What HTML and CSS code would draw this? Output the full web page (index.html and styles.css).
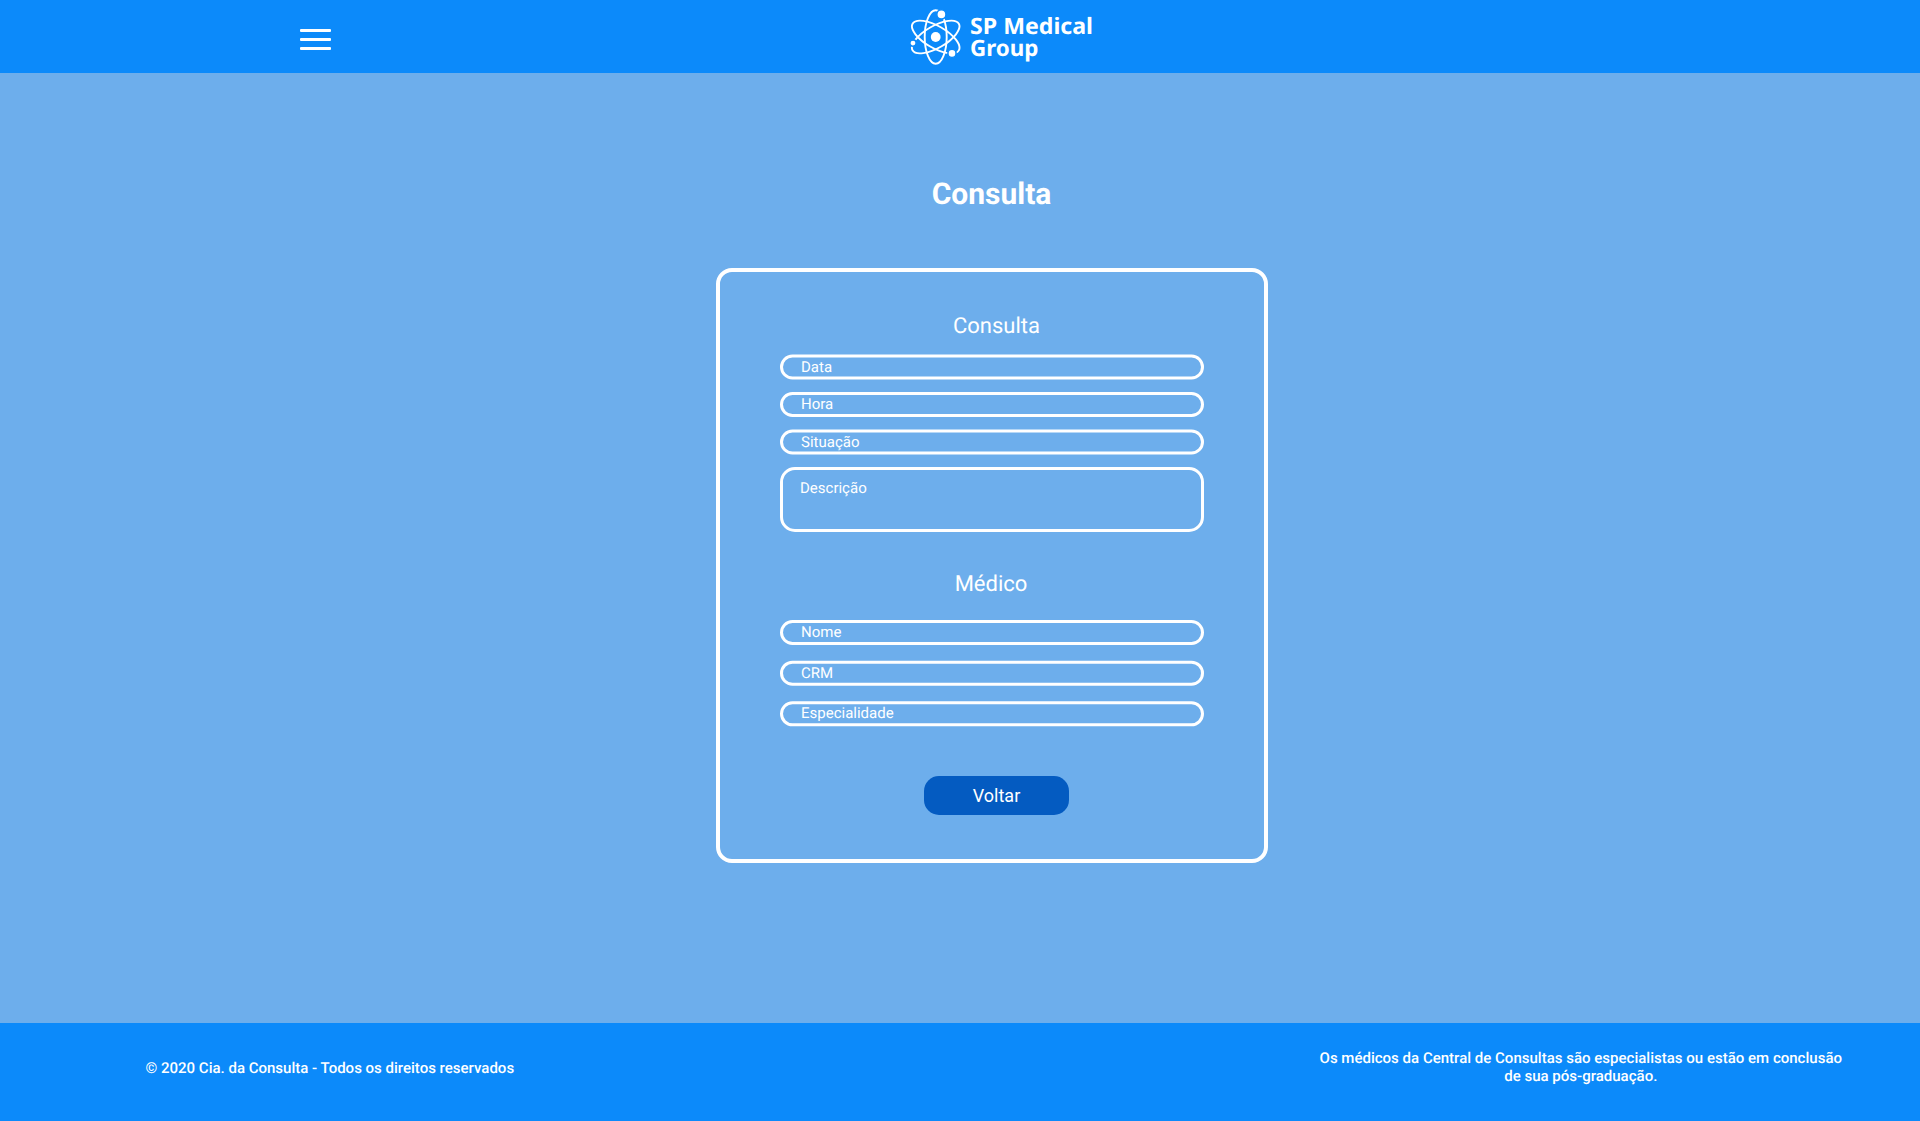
FILE: index.html
```html
<!DOCTYPE html>
<html lang="pt-BR">
<head>
<meta charset="utf-8">
<title>SP Medical Group - Consulta</title>
<link rel="stylesheet" href="styles.css">
</head>
<body>
<header class="header">
  <button class="menu" aria-label="Menu"><span class="menu-bar"></span><span class="menu-bar"></span><span class="menu-bar"></span></button>
  <div class="logo">
    <svg class="logo-atom" width="52" height="58" viewBox="0 0 52 58" aria-hidden="true">
      <g fill="none" stroke="#fff" stroke-width="1.9">
        <ellipse cx="25.7" cy="29" rx="11" ry="26.7"/>
        <ellipse cx="25.7" cy="29" rx="11" ry="26.7" transform="rotate(60 25.7 29)"/>
        <ellipse cx="25.7" cy="29" rx="11" ry="26.7" transform="rotate(-60 25.7 29)"/>
      </g>
      <g fill="#fff" stroke="#0c8afa" stroke-width="1.6">
        <circle cx="31.4" cy="6.4" r="4.6"/>
        <circle cx="3" cy="35.1" r="3.2"/>
        <circle cx="42" cy="45.4" r="4.1"/>
      </g>
      <circle cx="25.7" cy="29" r="4.9" fill="#fff"/>
    </svg>
    <svg class="logo-name" width="130" height="58" viewBox="0 0 130 58">
      <text x="0" y="25.5" textLength="123" lengthAdjust="spacingAndGlyphs">SP Medical</text>
      <text x="0" y="48.2" textLength="68.5" lengthAdjust="spacingAndGlyphs">Group</text>
    </svg>
  </div>
</header>
<main class="main">
  <h1 class="title">Consulta</h1>
  <section class="panel">
    <h2 class="subtitle">Consulta</h2>
    <div class="fields fields-visit">
      <div class="field half">Data</div>
      <div class="field">Hora</div>
      <div class="field half">Situação</div>
      <div class="field field-area">Descrição</div>
    </div>
    <h2 class="subtitle subtitle-doctor">Médico</h2>
    <div class="fields fields-doctor">
      <div class="field">Nome</div>
      <div class="field third">CRM</div>
      <div class="field two-thirds">Especialidade</div>
    </div>
    <button class="back">Voltar</button>
  </section>
</main>
<footer class="footer">
  <p class="copyright">© 2020 Cia. da Consulta - Todos os direitos reservados</p>
  <p class="notice">Os médicos da Central de Consultas são especialistas ou estão em conclusão<br>de sua pós-graduação.</p>
</footer>
</body>
</html>
```
FILE: styles.css
```css
* { box-sizing: border-box; margin: 0; padding: 0; }
body {
  display: flex;
  flex-direction: column;
  height: 1121px;
  background: #6daeec;
  color: #fff;
  font-family: Roboto, "Liberation Sans", sans-serif;
  text-rendering: geometricPrecision;
  overflow: hidden;
}
.header { display: flex; height: 73px; background: #0c8afa; }
.menu {
  display: flex;
  flex-direction: column;
  gap: 6px;
  width: 32px;
  margin: 29px 0 0 300px;
  border: 0;
  background: none;
}
.menu-bar { width: 31px; height: 3px; border-radius: 1px; background: #fff; }
.logo { display: flex; gap: 8px; margin: 8px 0 0 578px; }
.logo-name { overflow: visible; fill: #fff; font: 700 22.5px "Noto Sans", "Open Sans", sans-serif; }
.main { display: flex; flex-direction: column; flex: 1; align-items: flex-start; }
.title { width: 551px; margin: 104px 0 0 716px; font-size: 30px; line-height: 35px; text-align: center; }
.panel {
  display: flex;
  flex-direction: column;
  width: 552px;
  height: 595px;
  margin: 56px 0 0 716px;
  padding: 0 60px;
  border: 4px solid #fff;
  border-radius: 16px;
}
.subtitle { margin: 42px 0 0 9px; font-size: 22px; font-weight: 400; line-height: 26px; text-align: center; }
.subtitle-doctor { margin: 40px 2px 0 0; }
.fields { display: flex; flex-direction: column; }
.fields-visit { margin-top: 14px; }
.fields-doctor { gap: 16px; margin-top: 22px; }
.field {
  height: 25px;
  padding-left: 18px;
  border: 3px solid #fff;
  border-radius: 13px;
  font-size: 15px;
  line-height: 18px;
}
.fields-visit .field { margin-bottom: 12px; }
.fields-visit .half { margin-bottom: 13px; transform: translateY(0.5px); }
.third { transform: translateY(-0.33px); }
.two-thirds { transform: translateY(-0.67px); }
.fields-visit .field-area { height: 65px; margin-bottom: 0; padding: 9px 0 0 17px; border-radius: 15px; }
.back {
  width: 145px;
  height: 38.5px;
  margin: 49px 0 0 144px;
  padding-top: 2px;
  border: 0;
  border-radius: 15px;
  background: #045bc1;
  color: #fff;
  font: 400 18px/36px Roboto, sans-serif;
}
.footer {
  display: flex;
  justify-content: space-between;
  height: 98px;
  padding: 0 78px 0 145.5px;
  background: #0c8afa;
  font-size: 15px;
  font-weight: 500;
  line-height: 18px;
}
.copyright { margin-top: 35px; transform: translateY(0.5px); }
.notice { margin-top: 26px; text-align: center; letter-spacing: 0.01px; }
```
